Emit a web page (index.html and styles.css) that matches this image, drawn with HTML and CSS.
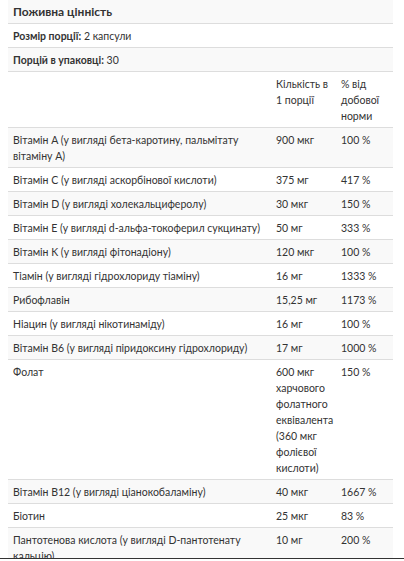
FILE: index.html
```html
<!DOCTYPE html>
<html lang="uk">
<head>
<meta charset="utf-8">
<link rel="stylesheet" href="styles.css">
</head>
<body>
<table class="facts">
  <colgroup>
    <col class="c-name">
    <col class="c-amount">
    <col class="c-dv">
  </colgroup>
  <tbody>
    <tr class="title-row"><td colspan="3" class="title">Поживна цінність</td></tr>
    <tr><td colspan="3"><b>Розмір порції:</b> 2 капсули</td></tr>
    <tr class="alt"><td colspan="3"><b>Порцій в упаковці:</b> 30</td></tr>
    <tr><td></td><td>Кількість в 1 порції</td><td>% від добової норми</td></tr>
    <tr class="alt"><td>Вітамін A (у вигляді бета-каротину, пальмітату вітаміну A)</td><td>900 мкг</td><td>100 %</td></tr>
    <tr><td>Вітамін C (у вигляді аскорбінової кислоти)</td><td>375 мг</td><td>417 %</td></tr>
    <tr class="alt"><td>Вітамін D (у вигляді холекальциферолу)</td><td>30 мкг</td><td>150 %</td></tr>
    <tr><td>Вітамін E (у вигляді d-альфа-токоферил сукцинату)</td><td>50 мг</td><td>333 %</td></tr>
    <tr class="alt"><td>Вітамін K (у вигляді фітонадіону)</td><td>120 мкг</td><td>100 %</td></tr>
    <tr><td>Тіамін (у вигляді гідрохлориду тіаміну)</td><td>16 мг</td><td>1333 %</td></tr>
    <tr class="alt"><td>Рибофлавін</td><td>15,25 мг</td><td>1173 %</td></tr>
    <tr><td>Ніацин (у вигляді нікотинаміду)</td><td>16 мг</td><td>100 %</td></tr>
    <tr class="alt"><td>Вітамін B6 (у вигляді піридоксину гідрохлориду)</td><td>17 мг</td><td>1000 %</td></tr>
    <tr><td>Фолат</td><td>600 мкг харчового фолатного еквівалента (360 мкг фолієвої кислоти)</td><td>150 %</td></tr>
    <tr class="alt"><td>Вітамін B12 (у вигляді ціанокобаламіну)</td><td>40 мкг</td><td>1667 %</td></tr>
    <tr><td>Біотин</td><td>25 мкг</td><td>83 %</td></tr>
    <tr class="alt"><td>Пантотенова кислота (у вигляді D-пантотенату кальцію)</td><td>10 мг</td><td>200 %</td></tr>
  </tbody>
</table>
<div class="bottom-edge"></div>
</body>
</html>
```

FILE: styles.css
```css
html, body {
  margin: 0;
  padding: 0;
  background: #fff;
}
body {
  padding: 0 11px 0 8px;
  font-family: Lato, "Liberation Sans", sans-serif;
  font-size: 10.5px;
  line-height: 16px;
  color: #333;
  overflow: hidden;
  height: 561px;
}
.facts {
  width: 385px;
  border-collapse: collapse;
  table-layout: fixed;
}
.c-name { width: 263px; }
.c-amount { width: 65px; }
.c-dv { width: 57px; }
.facts td {
  padding: 4px 5px 3px 5px;
  vertical-align: top;
  border-bottom: 1px solid #ddd;
}
.facts tr.alt td,
.facts tr.title-row td {
  background: #f9f9f9;
}
.facts td.title {
  font-size: 12px;
  font-weight: 700;
  line-height: 16px;
}
.facts b {
  font-weight: 700;
}
.bottom-edge {
  position: fixed;
  left: 0;
  right: 0;
  bottom: 0;
  height: 2px;
  border-top: 1px solid #333;
  background: #fff;
}
```
